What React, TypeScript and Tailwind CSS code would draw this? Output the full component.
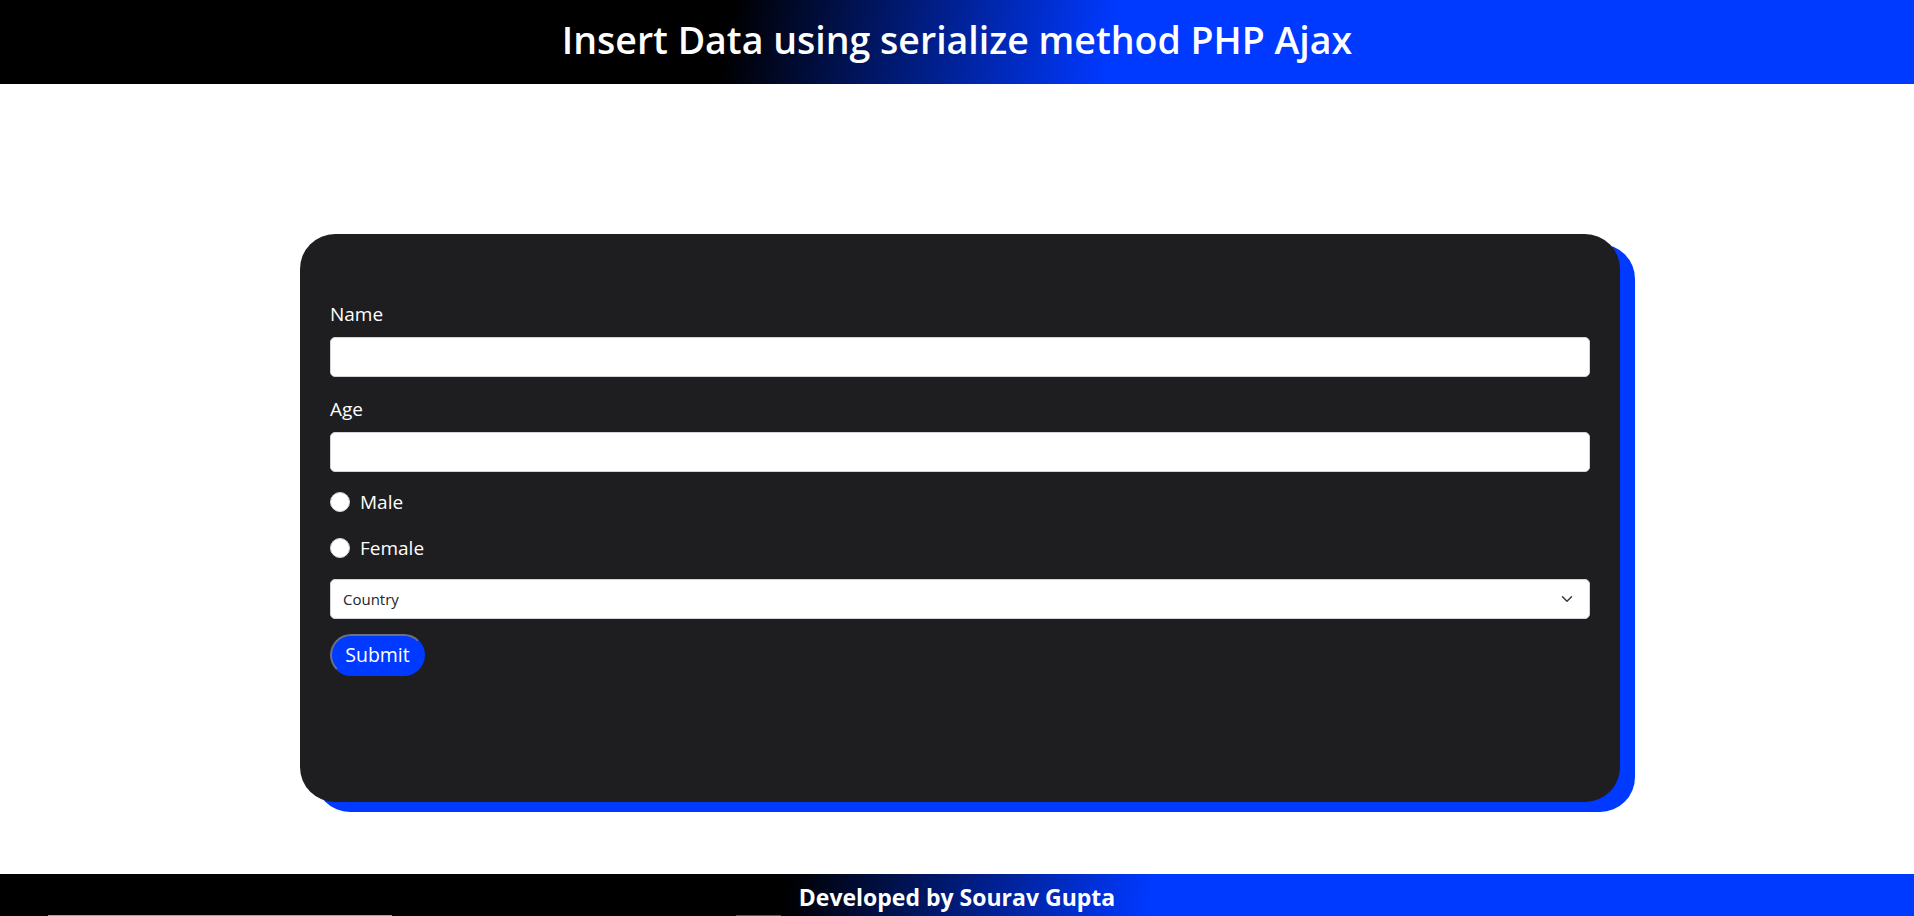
import React from 'react';

const font = { fontFamily: '"Open Sans", "Noto Sans", sans-serif' };

function ChevronDown() {
  return (
    <svg width="16" height="12" viewBox="0 0 16 16" fill="none">
      <path d="m2 5 6 6 6-6" stroke="#343a40" strokeWidth="2" strokeLinecap="round" strokeLinejoin="round" />
    </svg>
  );
}

function Radio({ label }: { label: string }) {
  return (
    <label className="flex items-center h-[30px] gap-[10px] text-white text-[19px] leading-[30px]">
      <span className="w-[20px] h-[20px] rounded-full bg-white border border-gray-300 shrink-0" />
      {label}
    </label>
  );
}

export default function App() {
  return (
    <div className="w-[1914px] min-h-[916px] bg-white flex flex-col" style={font}>
      {/* Header */}
      <header className="h-[84px] flex items-center justify-center bg-[linear-gradient(100deg,#000_38%,#0039ff_58%)]">
        <h1 className="text-white text-[37.5px] font-semibold leading-[48px] -mt-[4px]">
          Insert Data using serialize method PHP Ajax
        </h1>
      </header>

      {/* Form card */}
      <div className="ml-[300px] mt-[150px] w-[1320px] h-[568px] rounded-[35px] bg-[#1e1e20] shadow-[15px_10px_0_#0039ff] px-[30px] pt-[65px]">
        <form className="flex flex-col">
          <label className="text-white text-[19px] leading-[30px] mb-2">Name</label>
          <input type="text" className="h-[40px] w-full bg-white rounded-[5px] border border-[#ced4da] outline-none" />

          <label className="text-white text-[19px] leading-[30px] mt-[17px] mb-2">Age</label>
          <input type="text" className="h-[40px] w-full bg-white rounded-[5px] border border-[#ced4da] outline-none" />

          <div className="mt-[15px]">
            <Radio label="Male" />
          </div>
          <div className="mt-4">
            <Radio label="Female" />
          </div>

          <div className="mt-4 h-[40px] w-full bg-white rounded-[5px] border border-[#ced4da] flex items-center justify-between pl-[12px] pr-[14px]">
            <span className="text-[15px] text-[#212529]">Country</span>
            <ChevronDown />
          </div>

          <div className="mt-[15px]">
            <button
              type="button"
              className="h-[42px] w-[95px] rounded-full bg-[#0039ff] text-white text-[19.5px] border-2 border-t-gray-500 border-l-gray-500 border-r-[#0039ff] border-b-[#0039ff]"
            >
              Submit
            </button>
          </div>
        </form>
      </div>

      {/* Footer */}
      <footer className="mt-[72px] h-[42px] flex flex-col bg-[linear-gradient(100deg,#000_41%,#0039ff_60%)]">
        <div className="h-[41px] flex items-center justify-center">
          <p className="text-white text-[23px] font-bold leading-[30px] mt-[4px]">Developed by Sourav Gupta</p>
        </div>
        <div className="h-px flex">
          <div className="ml-[48px] w-[344px] bg-gray-400" />
          <div className="ml-[344px] w-[45px] bg-gray-600" />
        </div>
      </footer>
    </div>
  );
}
